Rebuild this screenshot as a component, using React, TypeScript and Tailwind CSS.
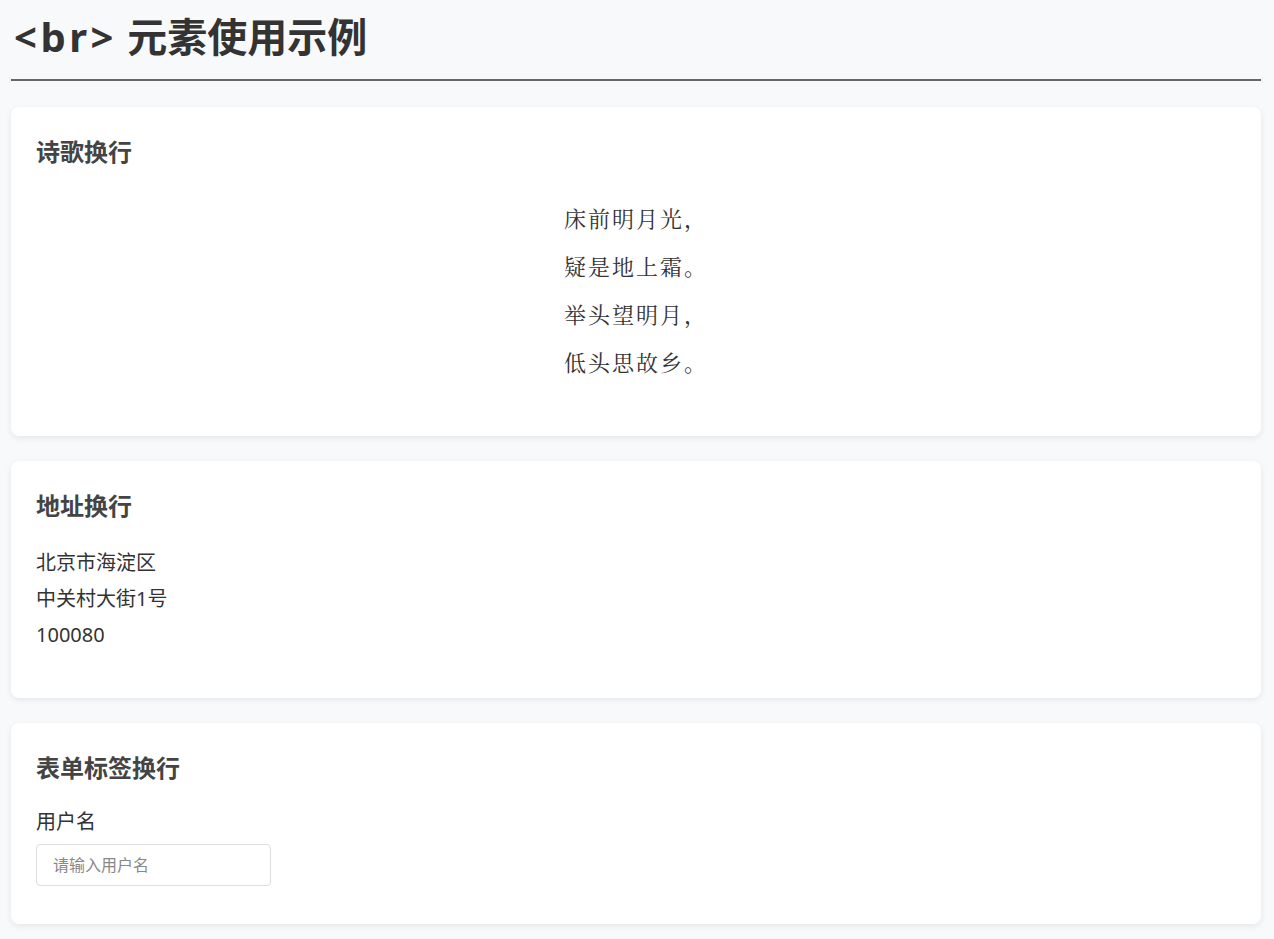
export default function App() {
  const poem = ["床前明月光，", "疑是地上霜。", "举头望明月，", "低头思故乡。"];
  return (
    <div
      className="min-h-screen bg-[#f8f9fa] pb-[15px] pl-[11px] pr-[13px] text-[#333]"
      style={{ fontFamily: '"Noto Sans", "Noto Sans CJK SC", sans-serif' }}
    >
      <header className="border-b-2 border-[#666] pb-[13px] pt-[8px]">
        <h1 className="pl-[3px] text-[40px] font-bold leading-[58px] text-[#333]">
          <span className="tracking-[3.5px]">&lt;br&gt;</span> 元素使用示例
        </h1>
      </header>

      <div className="mt-[26px] flex flex-col gap-[25px]">
        <section className="rounded-lg bg-white px-[25px] pb-[50px] pt-[27px] shadow-[0_2px_6px_rgba(0,0,0,0.08)]">
          <h2 className="text-[24px] font-bold leading-[36px] text-[#444]">诗歌换行</h2>
          <p
            className="mt-[24px] text-center text-[22px] leading-[48px] tracking-[2px] text-[#333]"
            style={{ fontFamily: '"Noto Serif CJK SC", "Liberation Serif", "Noto Sans CJK SC", serif' }}
          >
            {poem.map((l, i) => (
              <span key={i}>
                {l}
                {i < poem.length - 1 && <br />}
              </span>
            ))}
          </p>
        </section>

        <section className="rounded-lg bg-white px-[25px] pb-[45px] pt-[27px] shadow-[0_2px_6px_rgba(0,0,0,0.08)]">
          <h2 className="text-[24px] font-bold leading-[36px] text-[#444]">地址换行</h2>
          <p className="mt-[21px] text-[20px] leading-[36px] text-[#333]">
            北京市海淀区
            <br />
            中关村大街1号
            <br />
            100080
          </p>
        </section>

        <section className="rounded-lg bg-white px-[25px] pb-[38px] pt-[27px] shadow-[0_2px_6px_rgba(0,0,0,0.08)]">
          <h2 className="text-[24px] font-bold leading-[36px] text-[#444]">表单标签换行</h2>
          <label className="mt-[23px] block text-[20px] leading-[26px] text-[#333]">
            用户名
            <br />
            <input
              type="text"
              placeholder="请输入用户名"
              className="mt-[9px] h-[42px] w-[235px] rounded border border-[#ddd] px-[16px] text-[16px] text-[#333] placeholder:text-[#888] outline-none"
            />
          </label>
        </section>
      </div>
    </div>
  );
}
